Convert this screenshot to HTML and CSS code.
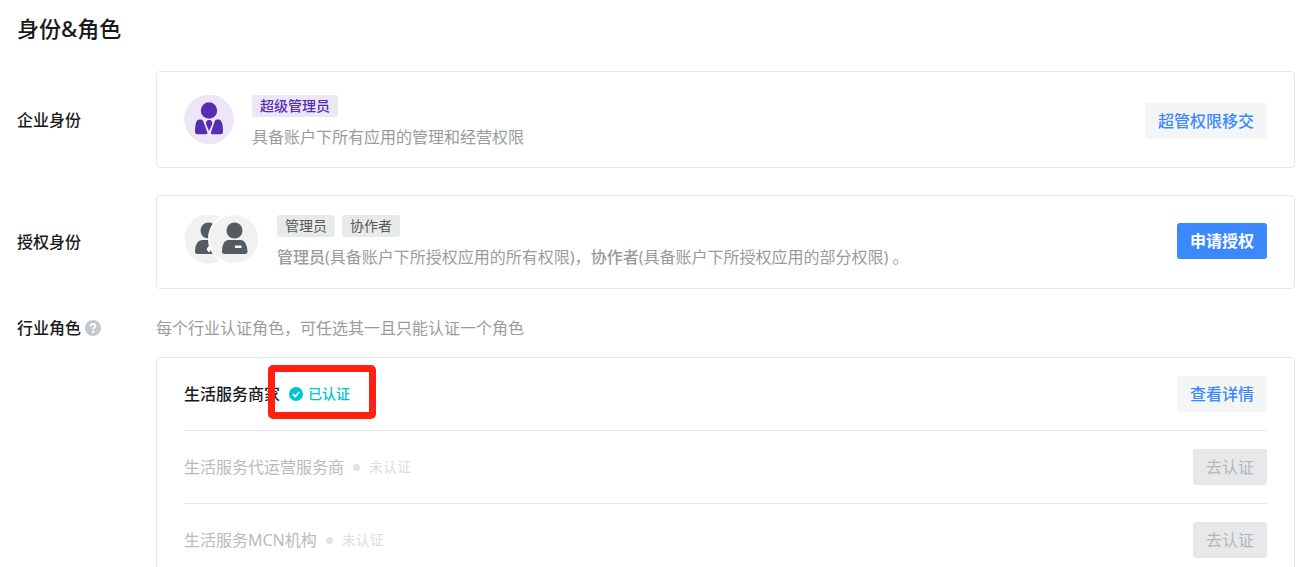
FILE: index.html
```html
<!DOCTYPE html>
<html lang="zh-CN">
<head>
<meta charset="utf-8">
<title>身份&amp;角色</title>
<link rel="stylesheet" href="styles.css">
</head>
<body>
<main class="page">
  <h1 class="page-title">身份&amp;角色</h1>

  <section class="row">
    <h2 class="row-label">企业身份</h2>
    <div class="card card-owner">
      <svg class="avatar" width="50" height="50" viewBox="0 0 50 50" aria-hidden="true">
        <circle cx="25" cy="24.500" r="24.800" fill="#ede6f7"/>
        <circle cx="25" cy="15.500" r="8.200" fill="#572eb2"/>
        <path d="M15.500 24.500h1.700q1.400 0 2 1.500L23.400 37.500q.5 1.700-1.200 1.700h-8.700q-2.500 0-2.500-2.500 0-8 2-11 .8-1.200 2.500-1.200zM34.500 24.500h-1.700q-1.400 0-2 1.500L26.900 37.500q-.5 1.700 1.200 1.700h8.400q2.500 0 2.500-2.500 0-8-2-11-.8-1.200-2.500-1.200z" fill="#572eb2"/>
        <path d="M23.800 25h2.600q1.800 1.200 1.800 3 0 2-1.300 4L25.100 36 23.300 32Q22 30 22 28q0-1.800 1.800-3z" fill="#572eb2"/>
      </svg>
      <div class="info">
        <div class="tags"><span class="tag tag-purple">超级管理员</span></div>
        <p class="desc">具备账户下所有应用的管理和经营权限</p>
      </div>
      <button class="btn btn-light" type="button">超管权限移交</button>
    </div>
  </section>

  <section class="row">
    <h2 class="row-label">授权身份</h2>
    <div class="card card-grant">
      <svg class="avatar" width="76" height="50" viewBox="0 0 76 50" aria-hidden="true">
        <circle cx="25" cy="24" r="24.500" fill="#f1f1f1"/>
        <circle cx="24.500" cy="15.500" r="8" fill="#555b63"/>
        <path d="M18 25h12q6 1 6 12 0 2-2.500 2h-20Q11 39 11 36.500q0-10.500 7-11.500z" fill="#555b63"/>
        <path d="M24.500 31l3 3-2.500 3.500-2.500-3z" fill="#fff"/>
        <circle cx="50" cy="24" r="25" fill="#f1f1f1" stroke="#fff" stroke-width="2"/>
        <circle cx="50.500" cy="15.500" r="8" fill="#555b63"/>
        <path d="M44 25h13q6 1 6.500 11.500 0 2.500-2.500 2.500H40.500Q38 39 38 36.500 38 26 44 25z" fill="#555b63"/>
        <rect x="51" y="30.500" width="6.500" height="2.500" rx=".5" fill="#fff"/>
      </svg>
      <div class="info">
        <div class="tags"><span class="tag">管理员</span><span class="tag">协作者</span></div>
        <p class="desc"><strong>管理员</strong>(具备账户下所授权应用的所有权限)，<strong>协作者</strong>(具备账户下所授权应用的部分权限) 。</p>
      </div>
      <button class="btn btn-primary" type="button">申请授权</button>
    </div>
  </section>

  <section class="row row-roles">
    <h2 class="row-label">行业角色
      <svg class="help" width="16" height="16" viewBox="0 0 16 16" aria-hidden="true">
        <circle cx="8" cy="8" r="8" fill="#c4c8cc"/>
        <path d="M5.500 6.300Q5.700 4 8 4t2.400 2c0 1.800-2.300 1.700-2.300 3.500" fill="none" stroke="#fff" stroke-width="1.800"/>
        <circle cx="8.100" cy="12" r="1.200" fill="#fff"/>
      </svg>
    </h2>
    <div class="roles">
      <p class="hint">每个行业认证角色，可任选其一且只能认证一个角色</p>
      <ul class="card role-list">
        <li class="role">
          <span class="role-name">生活服务商家</span>
          <span class="status status-ok">
            <svg width="14" height="14" viewBox="0 0 14 14" aria-hidden="true">
              <circle cx="7" cy="7" r="7" fill="#00c4d4"/>
              <path d="M3.800 7.200L6.200 9.500 10.200 5" fill="none" stroke="#fff" stroke-width="1.800"/>
            </svg>
            已认证
            <span class="highlight"></span>
          </span>
          <button class="btn btn-light" type="button">查看详情</button>
        </li>
        <li class="role role-off">
          <span class="role-name">生活服务代运营服务商</span>
          <span class="status"><i class="dot"></i>未认证</span>
          <button class="btn" type="button" disabled>去认证</button>
        </li>
        <li class="role role-off">
          <span class="role-name">生活服务MCN机构</span>
          <span class="status"><i class="dot"></i>未认证</span>
          <button class="btn" type="button" disabled>去认证</button>
        </li>
      </ul>
    </div>
  </section>
</main>
</body>
</html>
```
FILE: styles.css
```css
* {
  box-sizing: border-box;
}

body {
  margin: 0;
  height: 100vh;
  overflow: hidden;
  background: #fff;
  color: #17191c;
  font-family: "Noto Sans", "Noto Sans CJK SC", sans-serif;
  font-size: 16px;
  line-height: 24px;
}

h1, h2, p, ul {
  margin: 0;
  padding: 0;
}

.page {
  padding: 12px 6px 0 17px;
}

.page-title {
  margin-bottom: 27px;
  font-size: 22px;
  font-weight: 500;
  line-height: 32px;
}

.row {
  display: grid;
  grid-template-columns: 139px 1fr;
  align-items: center;
  margin-bottom: 27px;
}

.row-label {
  display: flex;
  align-items: center;
  gap: 4px;
  font-size: 16px;
  font-weight: 500;
}

.row-roles {
  align-items: start;
  margin: 0;
}

.card {
  display: flex;
  align-items: center;
  border: 1px solid #e6e8e8;
  border-radius: 4px;
}

.card-owner {
  gap: 18px;
  padding: 23px 27px 20px;
}

.card-grant {
  gap: 17px;
  padding: 19px 27px 21px;
}

.avatar {
  flex: none;
  align-self: flex-start;
}

.info {
  flex: 1;
}

.tags {
  display: flex;
  gap: 7px;
}

.tag {
  padding: 0 8px;
  border-radius: 3px;
  background: #e8eae9;
  color: #555957;
  font-size: 14px;
  line-height: 22px;
}

.tag-purple {
  background: #ede6f7;
  color: #572eb2;
  font-weight: 500;
}

.desc {
  margin-top: 10px;
  color: #999c9b;
  line-height: 20px;
}

.desc strong {
  font-weight: 500;
}

.btn {
  flex: none;
  height: 36px;
  padding: 0 13px;
  border: 0;
  border-radius: 3px;
  background: #e6e8ea;
  color: #b3b6b8;
  font: inherit;
}

.btn-light {
  background: #f4f6f6;
  color: #3c89ff;
  font-weight: 500;
}

.btn-primary {
  background: #3c89ff;
  color: #fff;
  font-weight: 700;
}

.hint {
  margin-bottom: 17px;
  color: #999c9b;
}

.role-list {
  display: block;
  padding: 0 27px;
  list-style: none;
}

.role {
  display: flex;
  align-items: center;
  height: 73px;
  border-bottom: 1px solid #e6e8e8;
}

.role-name {
  margin-right: 9px;
  font-weight: 500;
}

.role .btn {
  margin-left: auto;
}

.role-off .role-name {
  color: #b8bbba;
  font-weight: 400;
}

.status {
  position: relative;
  display: flex;
  align-items: center;
  color: #dcdedd;
  font-size: 14px;
}

.status-ok {
  gap: 5px;
  color: #00c4d4;
  font-weight: 500;
}

.dot {
  width: 7px;
  height: 7px;
  margin-right: 9px;
  border-radius: 50%;
  background: #e2e4e3;
}

.highlight {
  position: absolute;
  inset: -17px -26px -13px -21px;
  border: 7px solid #ff2012;
  border-radius: 5px;
}
```
